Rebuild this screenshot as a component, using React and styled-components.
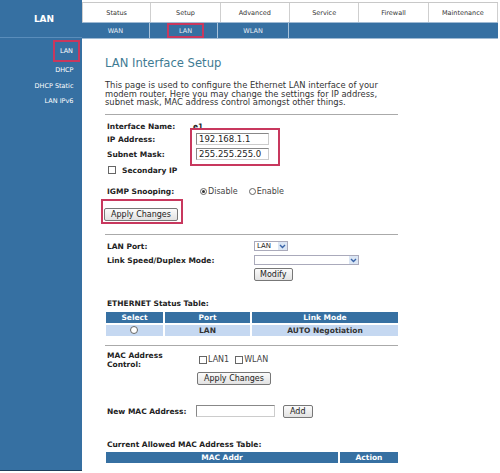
import React from 'react';
import styled, { createGlobalStyle } from 'styled-components';

const GlobalStyle = createGlobalStyle`
  html, body { margin: 0; padding: 0; background: #fff; }
  body {
    width: 500px;
    height: 473px;
    overflow: hidden;
    font-family: "DejaVu Sans", Verdana, sans-serif;
    color: #222;
  }
  * { box-sizing: border-box; }
`;

const BLUE = '#3670a2';
const MARK = '#c8385e';

const Page = styled.div`
  display: flex;
  width: 500px;
  height: 473px;
`;

const Sidebar = styled.div`
  width: 82px;
  height: 471px;
  background: ${BLUE};
  border-bottom: 1px solid #1f3f5c;
  display: flex;
  flex-direction: column;
`;

const SideHeader = styled.div`
  height: 38px;
  border-bottom: 1px solid #5a8dbb;
  display: flex;
  align-items: center;
  justify-content: center;
  color: #fff;
  font-weight: bold;
  font-size: 9px;
  padding-left: 6px;
`;

const SideMenu = styled.ul`
  list-style: none;
  margin: 0;
  padding: 2px 2px 0 0;
  display: flex;
  flex-direction: column;
  align-items: flex-end;
  gap: 5.5px;
`;

const SideItem = styled.li`
  font-size: 6.5px;
  color: #fff;
  line-height: 10px;
  padding: ${p => (p.$marked ? '4px 5px' : '0 6.5px')};
  margin-bottom: ${p => (p.$marked ? '-2.5px' : '0')};
  border: ${p => (p.$marked ? `2px solid ${MARK}` : 'none')};
`;

const Main = styled.div`
  flex: 1;
  display: flex;
  flex-direction: column;
`;

const Nav = styled.div`
  margin-top: 2px;
  width: 416px;
  display: flex;
  flex-direction: column;
`;

const TabRow = styled.div`
  display: grid;
  grid-template-columns: repeat(6, 1fr);
  height: 20px;
  border-top: 1px solid #c8c8c8;
`;

const Tab = styled.div`
  display: flex;
  align-items: center;
  justify-content: center;
  font-size: 6.5px;
  color: #333;
  border-right: 1px solid #cfcfcf;
  &:first-child { border-left: 1px solid #cfcfcf; }
`;

const SubRow = styled.div`
  display: grid;
  grid-template-columns: 68px 68px 71px 1fr;
  height: 17px;
  background: ${BLUE};
  border-top: 1px solid #9fbad3;
  border-bottom: 1px solid #9fbad3;
`;

const SubTab = styled.div`
  display: flex;
  align-items: stretch;
  justify-content: center;
  font-size: 6.5px;
  color: #e8eef5;
  border-right: 1px solid #a8c2da;
  &:last-child { border-right: none; }
`;

const SubLabel = styled.span`
  display: flex;
  align-items: center;
  justify-content: center;
  width: ${p => (p.$marked ? '37px' : 'auto')};
  margin-left: ${p => (p.$marked ? '4px' : '0')};
  border: ${p => (p.$marked ? `2px solid ${MARK}` : 'none')};
`;

const Content = styled.div`
  width: 293px;
  margin-left: 23px;
  display: flex;
  flex-direction: column;
`;

const Title = styled.h1`
  margin: 17px 0 0;
  font-size: 11.6px;
  font-weight: normal;
  color: #3f7b93;
  line-height: 14px;
`;

const Desc = styled.p`
  margin: 11px 0 0;
  font-size: 8.4px;
  line-height: 8.5px;
  color: #333;
  white-space: nowrap;
`;

const Rule = styled.hr`
  margin: ${p => p.$top}px 0 0;
  border: none;
  border-top: 1px solid #aaa;
  height: 1px;
`;

const Row = styled.div`
  display: flex;
  align-items: ${p => p.$align || 'center'};
  height: ${p => p.$h || 13}px;
  margin-top: ${p => p.$mt || 0}px;
  padding-left: ${p => p.$pl || 2}px;
`;

const Label = styled.span`
  width: ${p => p.$w || 86}px;
  flex-shrink: 0;
  font-size: 7.5px;
  font-weight: bold;
  line-height: 9px;
  color: #222;
`;

const Value = styled.span`
  font-size: 7.5px;
  font-weight: bold;
`;

const Boxed = styled.div`
  display: flex;
  flex-direction: column;
  align-items: flex-start;
  align-self: flex-start;
  border: 2px solid ${MARK};
  margin: ${p => p.$margin};
  padding: ${p => p.$pad};
`;

const TextInput = styled.div`
  width: ${p => p.$w || 73}px;
  height: 12px;
  border: 1px solid #888;
  border-right-color: #ccc;
  border-bottom-color: #ccc;
  font-size: 8.5px;
  line-height: 10px;
  padding-left: 2px;
  color: #222;
  background: #fff;
`;

const FieldLine = styled.div`
  display: flex;
  align-items: center;
  height: 15px;
`;

const Stack = styled.div`
  display: flex;
  flex-direction: column;
  padding-top: ${p => p.$pt || 0}px;
`;

const Check = styled.span`
  display: inline-block;
  width: 8px;
  height: 8px;
  border: 1px solid #666;
  background: #fff;
  margin-right: ${p => p.$mr || 1}px;
`;

const Radio = styled.span`
  display: inline-flex;
  align-items: center;
  justify-content: center;
  width: ${p => p.$size || 7}px;
  height: ${p => p.$size || 7}px;
  border: 1px solid #666;
  border-radius: 50%;
  margin-right: 1px;
  background: #fff;
  &::after {
    content: '';
    display: ${p => (p.$on ? 'block' : 'none')};
    width: 3px;
    height: 3px;
    border-radius: 50%;
    background: #333;
  }
`;

const Opt = styled.span`
  display: inline-flex;
  align-items: center;
  font-size: 8px;
  color: #444;
  margin-right: ${p => p.$mr || 0}px;
`;

const Button = styled.div`
  display: inline-flex;
  align-items: center;
  justify-content: center;
  height: 13px;
  padding: 0 ${p => p.$px || 6}px;
  font-size: 8px;
  color: #222;
  border: 1px solid #777;
  border-radius: 2px;
  background: linear-gradient(#fbfbfb, #e2e2e2);
  margin-left: ${p => p.$ml || 0}px;
`;

const Select = styled.div`
  width: ${p => p.$w}px;
  height: 10px;
  border: 1px solid #aab;
  display: flex;
  justify-content: space-between;
  align-items: center;
  font-size: 7px;
  padding-left: 2px;
  background: #fff;
`;

const Arrow = styled.span`
  width: 9px;
  height: 8px;
  background: #dbe6f4;
  display: flex;
  align-items: center;
  justify-content: center;
`;

const SectionTitle = styled.div`
  font-size: 7.5px;
  font-weight: bold;
  margin-top: ${p => p.$mt}px;
  padding-left: 2px;
  line-height: 9px;
`;

const Table = styled.div`
  display: grid;
  grid-template-columns: ${p => p.$cols};
  gap: 2px;
  margin-top: ${p => p.$mt}px;
  padding-left: 1px;
`;

const Th = styled.div`
  background: ${BLUE};
  color: #fff;
  font-size: 7.5px;
  font-weight: bold;
  height: 11px;
  display: flex;
  align-items: center;
  justify-content: center;
`;

const Td = styled.div`
  background: #c5d8f1;
  font-size: 7.5px;
  font-weight: bold;
  color: #333;
  height: 11px;
  display: flex;
  align-items: center;
  justify-content: center;
`;

const DownArrow = () => (
  <svg width="7" height="5" viewBox="0 0 7 5">
    <path d="M1 1 L3.5 3.5 L6 1" fill="none" stroke="#3a64a8" strokeWidth="1.4" />
  </svg>
);

export default function App() {
  return (
    <Page>
      <GlobalStyle />
      <Sidebar>
        <SideHeader>LAN</SideHeader>
        <SideMenu>
          <SideItem $marked>LAN</SideItem>
          <SideItem>DHCP</SideItem>
          <SideItem>DHCP Static</SideItem>
          <SideItem>LAN IPv6</SideItem>
        </SideMenu>
      </Sidebar>
      <Main>
        <Nav>
          <TabRow>
            <Tab>Status</Tab>
            <Tab>Setup</Tab>
            <Tab>Advanced</Tab>
            <Tab>Service</Tab>
            <Tab>Firewall</Tab>
            <Tab>Maintenance</Tab>
          </TabRow>
          <SubRow>
            <SubTab><SubLabel>WAN</SubLabel></SubTab>
            <SubTab><SubLabel $marked>LAN</SubLabel></SubTab>
            <SubTab><SubLabel>WLAN</SubLabel></SubTab>
            <SubTab />
          </SubRow>
        </Nav>
        <Content>
          <Title>LAN Interface Setup</Title>
          <Desc>
            This page is used to configure the Ethernet LAN interface of your<br />
            modem router. Here you may change the settings for IP address,<br />
            subnet mask, MAC address control amongst other things.
          </Desc>
          <Rule $top={7} />
          <Row $mt={5}>
            <Label>Interface Name:</Label>
            <Value>e1</Value>
          </Row>
          <Row $h={36} $mt={-5} $align="flex-start">
            <Stack $pt={4}>
              <FieldLine><Label>IP Address:</Label></FieldLine>
              <FieldLine><Label>Subnet Mask:</Label></FieldLine>
            </Stack>
            <Boxed $margin="0 0 0 -3px" $pad="2px 9px 2px 4px">
              <FieldLine><TextInput>192.168.1.1</TextInput></FieldLine>
              <FieldLine><TextInput>255.255.255.0</TextInput></FieldLine>
            </Boxed>
          </Row>
          <Row $pl={3}>
            <Check $mr={6} />
            <Label>Secondary IP</Label>
          </Row>
          <Row $mt={8}>
            <Label $w={93}>IGMP Snooping:</Label>
            <Opt $mr={11}><Radio $on />Disable</Opt>
            <Opt><Radio />Enable</Opt>
          </Row>
          <Boxed $margin="1px 0 0 -4px" $pad="7px 3px 1px 1px">
            <Button>Apply Changes</Button>
          </Boxed>
          <Rule $top={10} />
          <Row $mt={5}>
            <Label $w={147}>LAN Port:</Label>
            <Select $w={34}>LAN<Arrow><DownArrow /></Arrow></Select>
          </Row>
          <Row $mt={1}>
            <Label $w={147}>Link Speed/Duplex Mode:</Label>
            <Select $w={105}><span /><Arrow><DownArrow /></Arrow></Select>
          </Row>
          <Row $h={15}>
            <Button $ml={147} $px={5}>Modify</Button>
          </Row>
          <SectionTitle $mt={17}>ETHERNET Status Table:</SectionTitle>
          <Table $cols="57px 85px 1fr" $mt={4}>
            <Th>Select</Th>
            <Th>Port</Th>
            <Th>Link Mode</Th>
            <Td><Radio $size={8} /></Td>
            <Td>LAN</Td>
            <Td>AUTO Negotiation</Td>
          </Table>
          <Rule $top={9} />
          <Row $h={22} $mt={3}>
            <Label $w={92}>MAC Address<br />Control:</Label>
            <Opt $mr={6}><Check />LAN1</Opt>
            <Opt><Check />WLAN</Opt>
          </Row>
          <Row $h={15}>
            <Button $ml={90}>Apply Changes</Button>
          </Row>
          <Row $h={15} $mt={18}>
            <Label $w={89}>New MAC Address:</Label>
            <TextInput $w={79} />
            <Button $ml={8}>Add</Button>
          </Row>
          <SectionTitle $mt={21}>Current Allowed MAC Address Table:</SectionTitle>
          <Table $cols="232px 1fr" $mt={3}>
            <Th>MAC Addr</Th>
            <Th>Action</Th>
          </Table>
        </Content>
      </Main>
    </Page>
  );
}
